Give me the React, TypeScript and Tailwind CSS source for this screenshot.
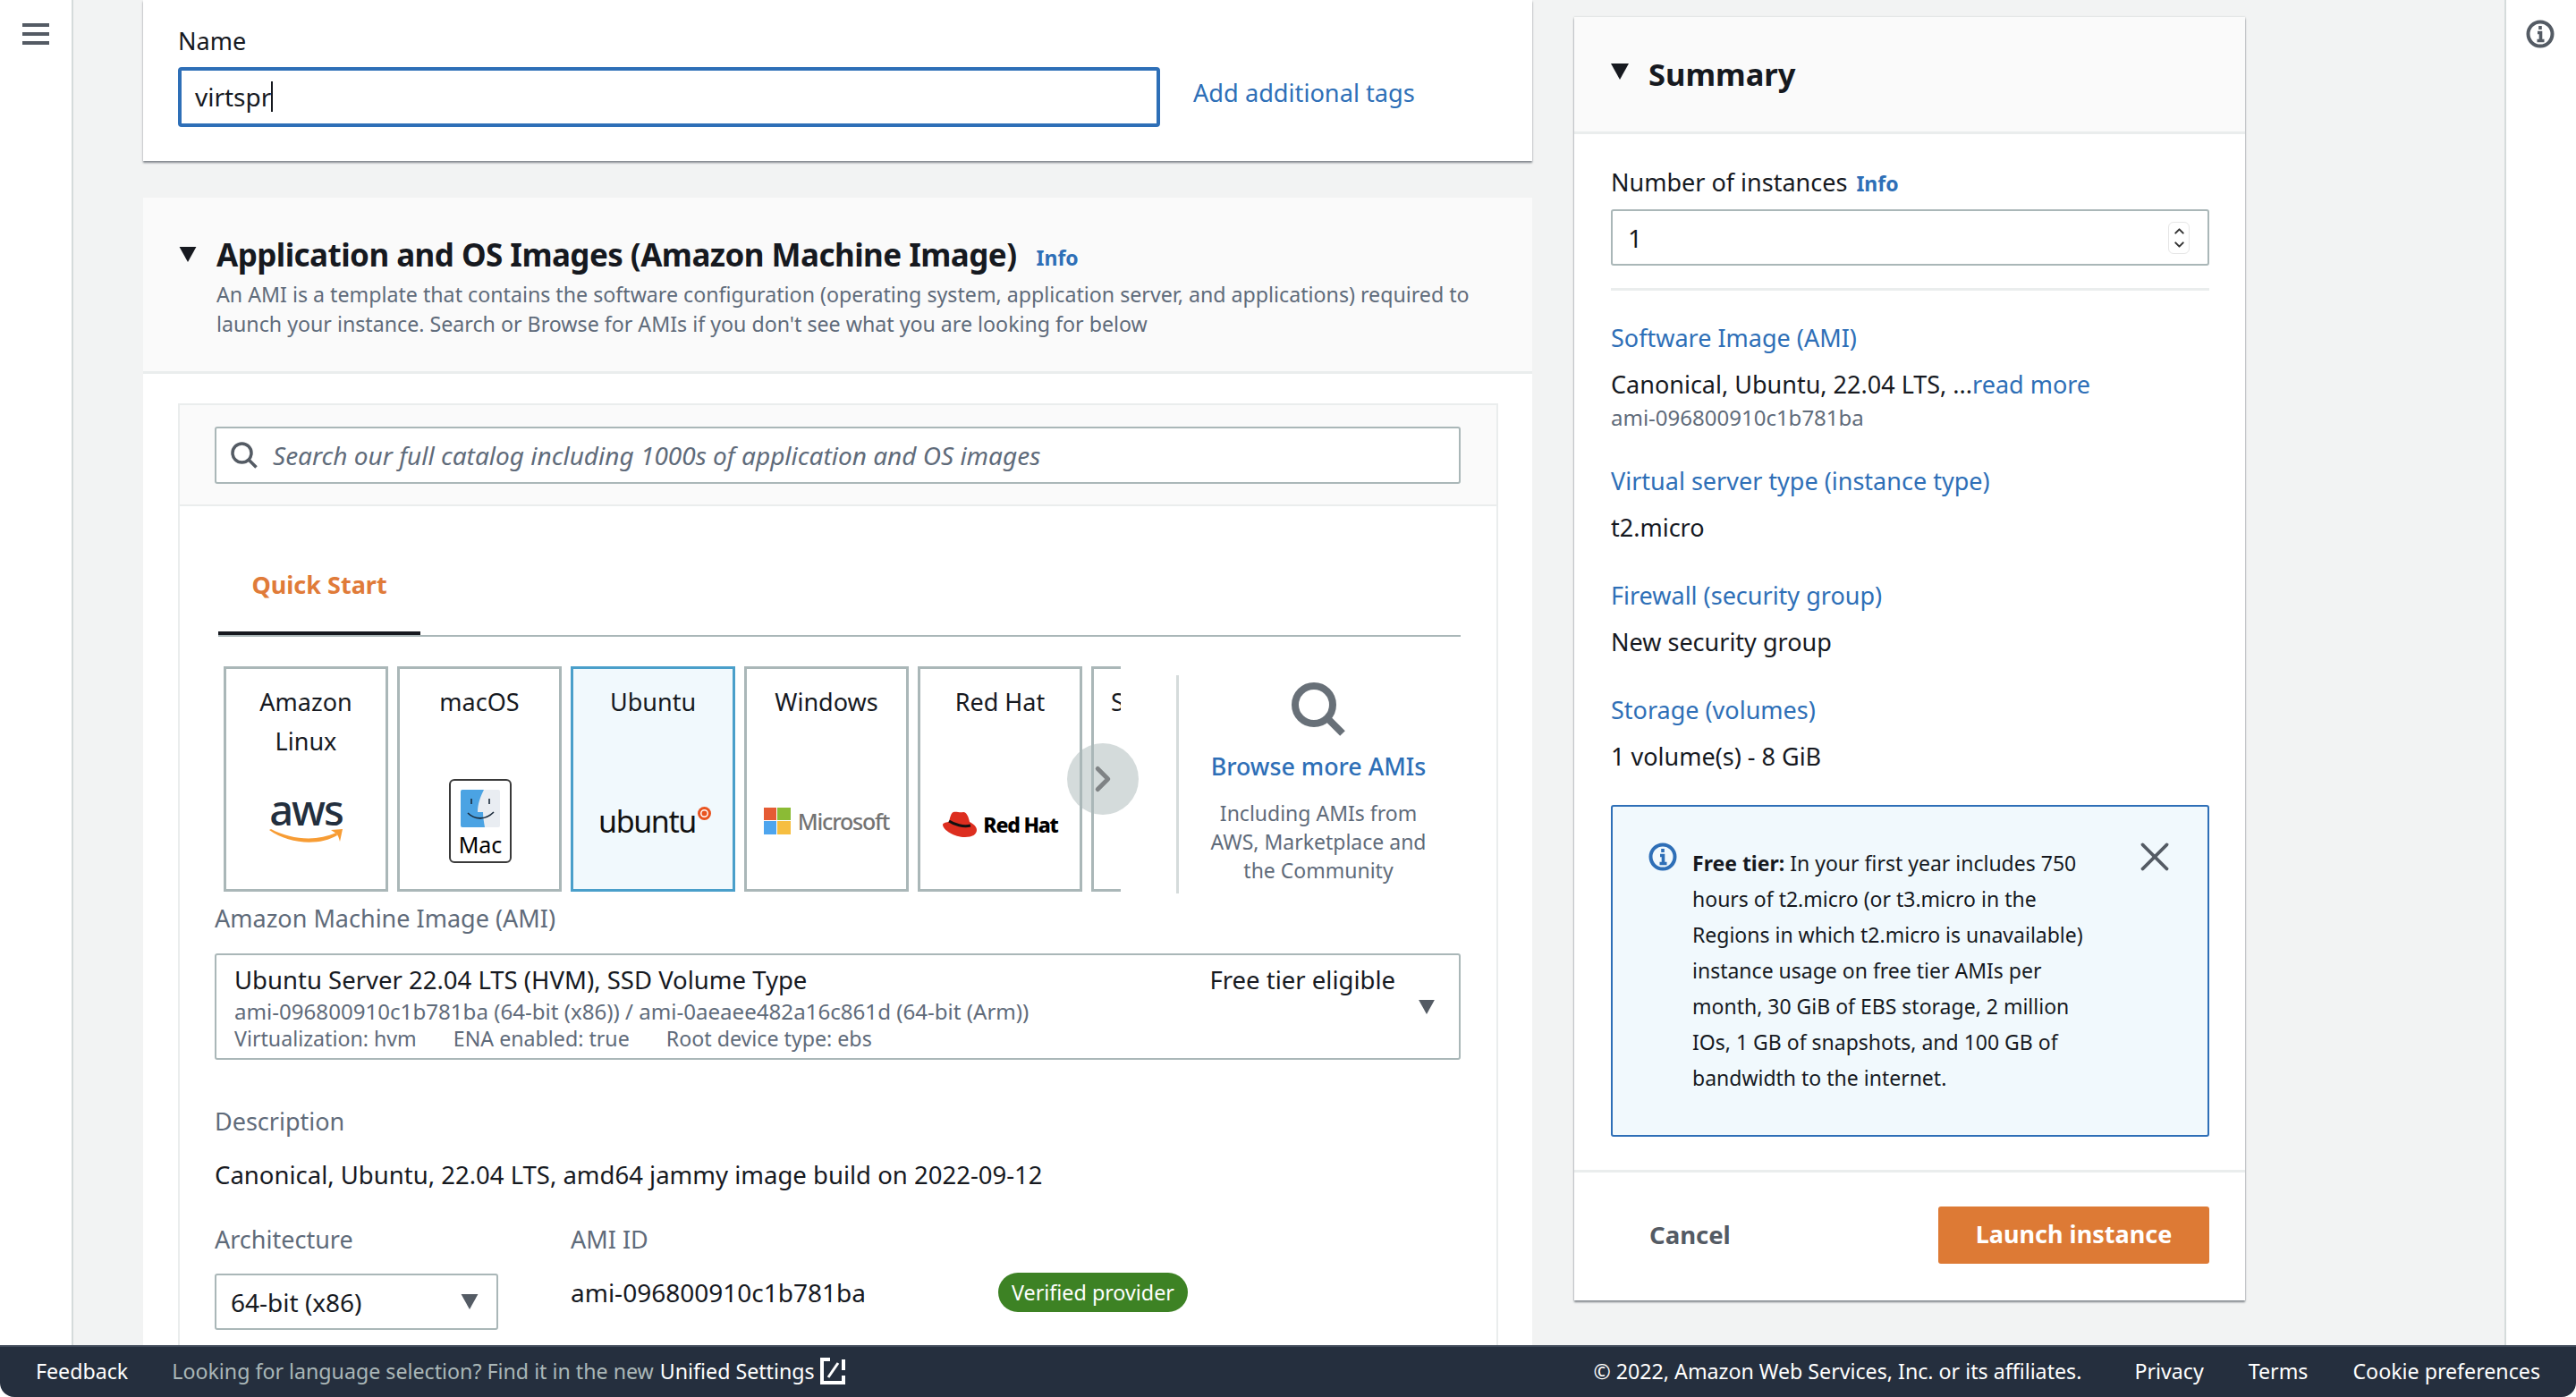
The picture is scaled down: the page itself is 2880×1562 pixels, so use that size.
import React from 'react';
import { ChevronRight, ChevronUp, ChevronDown, X } from 'lucide-react';

const Caret: React.FC<{ className?: string }> = ({ className = '' }) => (
    <svg viewBox="0 0 20 18" className={className} fill="currentColor">
        <path d="M0 0h20L10 18z" />
    </svg>
);

const InfoIcon: React.FC<{ className?: string }> = ({ className = '' }) => (
    <svg viewBox="0 0 32 32" className={className} fill="none" stroke="currentColor">
        <circle cx="16" cy="16" r="13.5" strokeWidth="4" />
        <path d="M16 7v4M13 14.5h3.5V23M12.5 23.5h8" strokeWidth="3.6" />
    </svg>
);

const SearchGlyph: React.FC<{ className?: string; width?: number }> = ({ className = '', width = 5 }) => (
    <svg viewBox="0 0 60 60" className={className} fill="none" stroke="currentColor">
        <circle cx="25" cy="25" r="21" strokeWidth={width} />
        <path d="M40 40l17 17" strokeWidth={width} />
    </svg>
);

const AwsLogo = () => (
    <div className="flex flex-col items-center">
        <span className="text-[47px] leading-[30px] font-medium tracking-[-2px] text-[#232f3e] pb-[6px]">aws</span>
        <svg viewBox="0 0 84 20" className="w-[84px] h-[20px]">
            <path d="M1 2c22 16 56 18 76 6l-1-3c-22 10-50 8-73-4z" fill="#f79c34" />
            <path d="M70 2l13-1-3 14c-1-4-2-7-4-9z" fill="#f79c34" />
        </svg>
    </div>
);

const MacLogo = () => (
    <div className="ml-[2px] w-[70px] h-[94px] border-2 border-[#3a3a3a] rounded-[6px] bg-white flex flex-col items-center pt-[10px]">
        <svg viewBox="0 0 44 42" className="w-[44px] h-[42px]">
            <rect width="44" height="42" rx="2" fill="#e9edf2" />
            <path d="M2 0h24c-4 8-7 16-7 25h6c0 6 1 11 2 17H2a2 2 0 0 1-2-2V2a2 2 0 0 1 2-2z" fill="#4ba3e3" />
            <path d="M12 10v6M32 10v6" stroke="#1a2a3a" strokeWidth="1.6" />
            <path d="M8 26c8 8 20 8 29-1" stroke="#1a2a3a" strokeWidth="1.6" fill="none" />
        </svg>
        <span className="text-[25px] leading-[38px] text-black">Mac</span>
    </div>
);

const UbuntuLogo = () => (
    <div className="flex items-start ml-[4px]">
        <span className="text-[34px] leading-[40px] tracking-[-1.4px] text-[#111]">ubuntu</span>
        <svg viewBox="0 0 16 16" className="w-[15px] h-[15px] mt-[4px] ml-[2px]">
            <circle cx="8" cy="8" r="8" fill="#e95420" />
            <circle cx="8" cy="8" r="4" fill="none" stroke="#fff" strokeWidth="1.6" />
        </svg>
    </div>
);

const MicrosoftLogo = () => (
    <div className="flex items-center gap-[8px]">
        <div className="grid grid-cols-2 gap-[1px] w-[30px] h-[30px]">
            <div className="bg-[#e55b34]" />
            <div className="bg-[#8bbb35]" />
            <div className="bg-[#4ea5ee]" />
            <div className="bg-[#f6be40]" />
        </div>
        <span className="text-[25px] leading-[30px] tracking-[-1.2px] font-medium text-[#737373]">Microsoft</span>
    </div>
);

const RedHatLogo = () => (
    <div className="flex items-center gap-[6px] mt-[8px]">
        <svg viewBox="0 0 40 30" className="w-[40px] h-[30px]">
            <path d="M13 1c3-1 7 1 11 0 4 0 6 6 7 11 4 2 8 5 8 9 0 5-5 8-13 8C14 29 1 21 1 15c0-2 5-3 7-3 1-4 2-10 5-11z" fill="#dd2e1f" />
            <path d="M8 11c6 4 16 7 24 5" stroke="#111" strokeWidth="3" fill="none" />
        </svg>
        <span className="text-[23px] leading-[30px] font-extrabold tracking-[-1.2px] text-black">Red Hat</span>
    </div>
);

const tiles: { label: string[]; logo?: React.ReactNode; selected?: boolean }[] = [
    { label: ['Amazon', 'Linux'], logo: <AwsLogo /> },
    { label: ['macOS'], logo: <MacLogo /> },
    { label: ['Ubuntu'], logo: <UbuntuLogo />, selected: true },
    { label: ['Windows'], logo: <MicrosoftLogo /> },
    { label: ['Red Hat'], logo: <RedHatLogo /> },
    { label: ['SUSE Linux'] },
];

const AppOsSection = () => (
    <div className="mt-[41px] bg-white pb-[60px]">
        <div className="h-[197px] bg-[#fafafa] border-b-[3px] border-[#eaeded] pl-[40px] pr-[30px] pt-[44px]">
            <div className="flex items-center h-[40px]">
                <Caret className="w-[20px] h-[17px] text-[#16191f] -mt-[2px]" />
                <h2 className="ml-[22px] text-[35px] leading-[40px] font-bold text-[#16191f] tracking-[-0.55px]">
                    Application and OS Images (Amazon Machine Image)
                </h2>
                <a className="ml-[22px] mt-[6px] text-[23px] font-bold text-[#2e6fb7]">Info</a>
            </div>
            <p className="ml-[42px] mt-[8px] text-[23.2px] leading-[33px] text-[#5f6b7a] whitespace-nowrap">
                An AMI is a template that contains the software configuration (operating system, application server, and applications) required to
                <br />
                launch your instance. Search or Browse for AMIs if you don&apos;t see what you are looking for below
            </p>
        </div>

        <div className="ml-[39px] mr-[38px] mt-[33px] border-2 border-[#eaeded] pb-[60px]">
            {/* catalog search */}
            <div className="h-[113px] bg-[#fafafa] border-b-2 border-[#eaeded] pt-[24px] pl-[39px] pr-[40px]">
                <div className="h-[64px] bg-white border-2 border-[#aab7b8] rounded-[3px] flex items-center pl-[16px] gap-[17px]">
                    <SearchGlyph className="w-[30px] h-[30px] text-[#545b64]" width={7} />
                    <span className="text-[28px] italic text-[#5f6b7a]">Search our full catalog including 1000s of application and OS images</span>
                </div>
            </div>

            <div className="pl-[39px] pr-[40px]">
                {/* tabs */}
                <div className="h-[146px] border-b-2 border-[#aab7b8] ml-[4px]">
                    <div className="w-[226px] h-[144px] border-b-[4px] border-[#16191f] flex items-center justify-center pt-[36px]">
                        <span className="text-[27px] font-bold text-[#e07b39]">Quick Start</span>
                    </div>
                </div>

                {/* os tiles */}
                <div className="mt-[33px] flex h-[252px] relative">
                    <div className="ml-[10px] w-[1003px] flex gap-[10px] overflow-hidden shrink-0">
                        {tiles.map((t) => (
                            <div
                                key={t.label[0]}
                                className={`w-[184px] shrink-0 border-[3px] flex flex-col ${
                                    t.selected ? 'border-[#4a9fca] bg-[#f1f9fd]' : 'border-[#aab7b8] bg-white'
                                }`}
                            >
                                <div className="h-[93px] pt-[15px] text-center text-[27px] leading-[44px] text-[#16191f]">
                                    {t.label.map((l) => (
                                        <div key={l} className="whitespace-nowrap">{l}</div>
                                    ))}
                                </div>
                                <div className="flex-1 flex items-center justify-center">{t.logo}</div>
                            </div>
                        ))}
                    </div>
                    <div className="absolute left-[953px] top-[86px] w-[80px] h-[80px] rounded-full bg-[#aab7b8]/50 flex items-center justify-center text-[#7f8385]">
                        <ChevronRight size={46} strokeWidth={2.6} />
                    </div>
                    <div className="ml-[62px] mt-[10px] w-[3px] h-[244px] bg-[#d5dbdb] shrink-0" />
                    <div className="flex-1 flex flex-col items-center pr-[3px]">
                        <SearchGlyph className="mt-[18px] w-[60px] h-[60px] text-[#687078]" width={8} />
                        <a className="mt-[14px] text-[26.8px] leading-[40px] text-[#2e6fb7] font-medium">Browse more AMIs</a>
                        <p className="mt-[16px] text-[23px] leading-[32px] text-center text-[#5f6b7a]">
                            Including AMIs from
                            <br />
                            AWS, Marketplace and
                            <br />
                            the Community
                        </p>
                    </div>
                </div>

                {/* ami */}
                <div className="mt-[12px] text-[27px] leading-[36px] text-[#5f6b7a]">Amazon Machine Image (AMI)</div>
                <div className="mt-[21px] h-[119px] border-2 border-[#aab7b8] rounded-[3px] pl-[20px] pr-[30px] relative">
                    <div className="flex h-[56px] items-center text-[27.5px] text-[#16191f]">
                        <span>Ubuntu Server 22.04 LTS (HVM), SSD Volume Type</span>
                        <span className="ml-auto mr-[41px]">Free tier eligible</span>
                    </div>
                    <div className="-mt-[8px] text-[24.1px] leading-[30px] text-[#5f6b7a]">
                        ami-096800910c1b781ba (64-bit (x86)) / ami-0aeaee482a16c861d (64-bit (Arm))
                    </div>
                    <div className="text-[23.2px] leading-[30px] text-[#5f6b7a] flex gap-[41px]">
                        <span>Virtualization: hvm</span>
                        <span>ENA enabled: true</span>
                        <span>Root device type: ebs</span>
                    </div>
                    <Caret className="absolute right-[26px] top-[50px] w-[20px] h-[16px] text-[#545b64]" />
                </div>

                <div className="mt-[51px] text-[27px] leading-[36px] text-[#5f6b7a]">Description</div>
                <div className="mt-[24px] text-[27.5px] leading-[36px] text-[#16191f]">
                    Canonical, Ubuntu, 22.04 LTS, amd64 jammy image build on 2022-09-12
                </div>

                <div className="mt-[36px] flex">
                    <div className="w-[398px]">
                        <div className="text-[27px] leading-[36px] text-[#5f6b7a]">Architecture</div>
                        <div className="mt-[20px] w-[317px] h-[63px] border-2 border-[#aab7b8] rounded-[3px] flex items-center pl-[16px] pr-[20px] text-[28px] text-[#16191f]">
                            64-bit (x86)
                            <Caret className="ml-auto w-[20px] h-[17px] text-[#545b64]" />
                        </div>
                    </div>
                    <div className="w-[478px]">
                        <div className="text-[27px] leading-[36px] text-[#5f6b7a]">AMI ID</div>
                        <div className="mt-[23px] text-[28px] leading-[36px] text-[#16191f]">ami-096800910c1b781ba</div>
                    </div>
                    <div className="mt-[55px] h-[44px] w-[212px] rounded-[22px] bg-[#3d8224] flex items-center justify-center text-[23.3px] text-white">
                        Verified provider
                    </div>
                </div>
            </div>
        </div>
    </div>
);

const SummaryField: React.FC<{ title: string; value: string }> = ({ title, value }) => (
    <>
        <a className="mt-[40px] block text-[27px] leading-[36px] text-[#2e6fb7]">{title}</a>
        <div className="mt-[16px] text-[27px] leading-[36px] text-[#16191f]">{value}</div>
    </>
);

const Summary = () => (
    <div className="w-[750px] mt-[19px] bg-white shadow-[0_2px_2px_rgba(84,91,100,0.7),0_0_2px_rgba(84,91,100,0.25)]">
        <div className="h-[131px] bg-[#fafafa] border-b-[3px] border-[#eaeded] pl-[40px] flex items-center">
            <Caret className="w-[22px] h-[18px] text-[#16191f] -mt-[6px]" />
            <h2 className="ml-[21px] text-[34.5px] leading-[40px] font-bold text-[#16191f]">Summary</h2>
        </div>
        <div className="pl-[41px] pr-[40px] pt-[36px] pb-[37px]">
            <div className="flex items-center h-[36px] text-[27px] text-[#16191f]">
                Number of instances
                <a className="ml-[10px] mt-[2px] text-[23px] font-bold text-[#2e6fb7]">Info</a>
            </div>
            <div className="mt-[12px] h-[63px] border-2 border-[#aab7b8] rounded-[3px] flex items-center pl-[17px] pr-[20px] text-[28px] text-[#16191f]">
                1
                <div className="ml-auto w-[24px] h-[36px] flex flex-col items-center justify-center border border-[#e6e6e6] rounded-[6px] text-[#333]">
                    <ChevronUp size={17} strokeWidth={2.8} className="-mb-[1px]" />
                    <ChevronDown size={17} strokeWidth={2.8} className="-mt-[1px]" />
                </div>
            </div>
            <div className="mt-[25px] h-[3px] bg-[#eaeded]" />

            <a className="mt-[35px] block text-[27px] leading-[36px] text-[#2e6fb7]">Software Image (AMI)</a>
            <div className="mt-[16px] text-[27px] leading-[36px] text-[#16191f]">
                Canonical, Ubuntu, 22.04 LTS, ...<a className="text-[#2e6fb7]">read more</a>
            </div>
            <div className="mt-[4px] text-[24px] leading-[30px] text-[#5f6b7a]">ami-096800910c1b781ba</div>

            <a className="mt-[38px] block text-[27px] leading-[36px] text-[#2e6fb7]">Virtual server type (instance type)</a>
            <div className="mt-[16px] text-[27px] leading-[36px] text-[#16191f]">t2.micro</div>
            <SummaryField title="Firewall (security group)" value="New security group" />
            <SummaryField title="Storage (volumes)" value="1 volume(s) - 8 GiB" />

            <div className="mt-[36px] h-[371px] border-2 border-[#2e6fb7] rounded-[3px] bg-[#f1f9fd] flex pl-[40px] pt-[40px] pr-[32px]">
                <InfoIcon className="w-[32px] h-[32px] text-[#2e6fb7] shrink-0" />
                <p className="ml-[17px] mt-[3px] text-[23px] leading-[40px] text-[#16191f] whitespace-nowrap">
                    <b>Free tier:</b> In your first year includes 750
                    <br />
                    hours of t2.micro (or t3.micro in the
                    <br />
                    Regions in which t2.micro is unavailable)
                    <br />
                    instance usage on free tier AMIs per
                    <br />
                    month, 30 GiB of EBS storage, 2 million
                    <br />
                    IOs, 1 GB of snapshots, and 100 GB of
                    <br />
                    bandwidth to the internet.
                </p>
                <X size={54} strokeWidth={1.7} className="ml-auto text-[#545b64] -mt-[11px] shrink-0" />
            </div>
        </div>
        <div className="h-[146px] border-t-[3px] border-[#eaeded] flex items-center justify-between pl-[84px] pr-[40px] pb-[4px]">
            <a className="text-[27.5px] font-bold text-[#545b64]">Cancel</a>
            <button className="w-[303px] h-[64px] rounded-[3px] bg-[#dd7a35] text-white text-[27px] font-bold">Launch instance</button>
        </div>
    </div>
);

export default function App() {
    return (
        <div className="w-[2880px] h-[1562px] flex flex-col overflow-hidden bg-white font-['Noto_Sans','Open_Sans',sans-serif]">
            <div className="flex-1 min-h-0 flex bg-[#f2f3f3]">
                <div className="w-[82px] shrink-0 bg-white border-r-2 border-[#d5dbdb] pt-[26px] pl-[25px]">
                    <div className="w-[30px] flex flex-col gap-[6px]">
                        <div className="h-[4px] bg-[#545b64]" />
                        <div className="h-[4px] bg-[#545b64]" />
                        <div className="h-[4px] bg-[#545b64]" />
                    </div>
                </div>

                <div className="flex-1 min-w-0 flex pl-[78px]">
                    <div className="w-[1553px] shrink-0">
                        {/* name card */}
                        <div className="h-[180px] bg-white shadow-[0_2px_2px_rgba(84,91,100,0.7)] pl-[39px] pt-[28px]">
                            <div className="text-[27px] leading-[36px] text-[#16191f]">Name</div>
                            <div className="mt-[11px] flex items-center">
                                <div className="w-[1098px] h-[67px] border-4 border-[#2e6fb7] rounded-[4px] flex items-center pl-[15px] pb-[2px] text-[28px] text-[#16191f]">
                                    virtspr
                                    <span className="w-[2px] h-[34px] bg-[#16191f]" />
                                </div>
                                <a className="ml-[37px] mb-[8px] text-[27.2px] text-[#2e6fb7]">Add additional tags</a>
                            </div>
                        </div>
                        <AppOsSection />
                    </div>
                    <div className="ml-[47px]">
                        <Summary />
                    </div>
                </div>

                <div className="w-[80px] shrink-0 bg-white border-l-2 border-[#d5dbdb] pt-[22px] pl-[22px]">
                    <InfoIcon className="w-[32px] h-[32px] text-[#545b64]" />
                </div>
            </div>

            <div className="h-[58px] shrink-0 bg-[#252f3e] border-t-2 border-[#414b5a] rounded-b-[16px] flex items-center pl-[40px] pr-[40px] pb-[2px] text-[23.2px] text-white">
                <span>Feedback</span>
                <span className="ml-[49px] text-[#aab7b8]">Looking for language selection? Find it in the new</span>
                <span className="ml-[7px]">Unified Settings</span>
                <svg viewBox="0 0 28 30" className="ml-[6px] w-[28px] h-[30px]" fill="none" stroke="white" strokeWidth="4">
                    <path d="M11 2H2v26h24V20M26 14V2" />
                    <path d="M20 6L9 22" strokeWidth="3" />
                </svg>
                <span className="ml-auto">© 2022, Amazon Web Services, Inc. or its affiliates.</span>
                <span className="ml-[59px]">Privacy</span>
                <span className="ml-[50px]">Terms</span>
                <span className="ml-[50px]">Cookie preferences</span>
            </div>
        </div>
    );
}
